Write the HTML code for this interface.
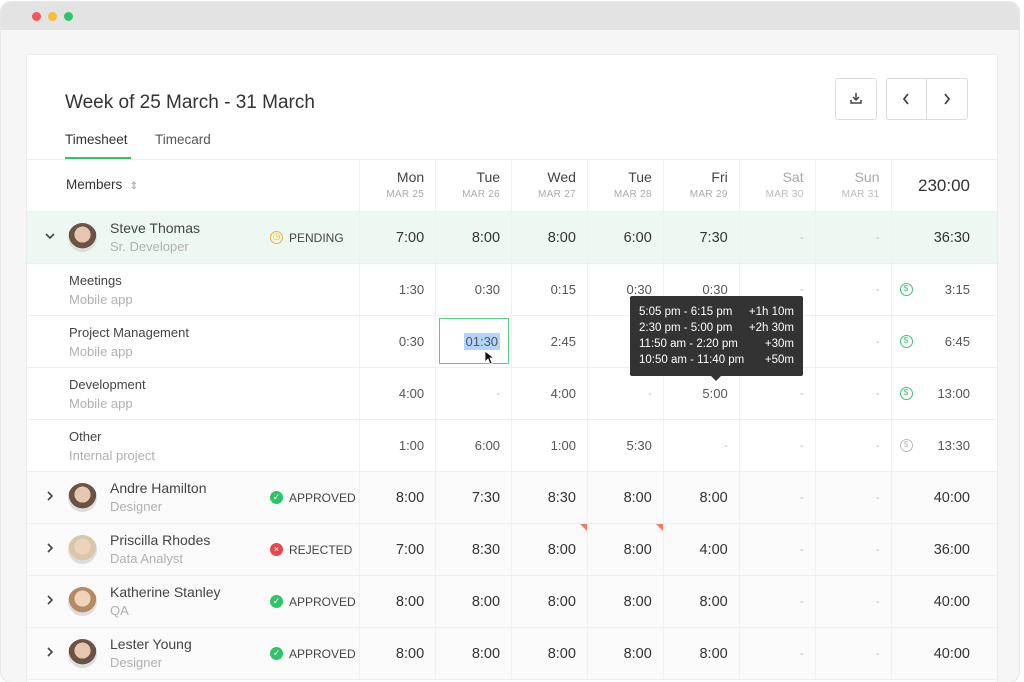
<!DOCTYPE html>
<html><head><meta charset="utf-8"><style>
*{box-sizing:border-box;margin:0;padding:0}
body{width:1024px;height:670px;background:#fff;font-family:"Liberation Sans",sans-serif;position:relative;overflow:hidden;color:#444}
.win{position:absolute;left:1px;top:2px;width:1018px;height:680px;background:#f6f6f6;border-radius:10px;overflow:hidden;box-shadow:0 0 0 1px #e6e6e6}
.bar{height:28px;background:#e3e3e3}
.dot{position:absolute;top:10px;width:9px;height:9px;border-radius:50%}
.card{position:absolute;left:25px;top:52px;width:972px;height:640px;background:#fff;border:1px solid #ececec}
.a{position:absolute}
table{position:absolute;left:0;top:104px;border-collapse:collapse;table-layout:fixed}
td{border-bottom:1px solid #efefef;border-left:1px solid #f0f0f0;text-align:right;padding-right:11px;font-size:14px;color:#444;height:52px;vertical-align:middle;white-space:nowrap}
td:first-child{border-left:none;text-align:left;padding:0;position:relative}
tr.m td{background:#fafafa;font-size:14.5px;color:#333}
tr.s td{background:#eef8f2;font-size:14.5px;color:#333}
tr.sub td{font-size:13px;color:#555}
tr td.d{color:#bbb;font-size:11px}
.nm{position:absolute;left:83px;top:8px;font-size:14px;color:#444}
.rl{position:absolute;left:83px;top:27px;font-size:13px;color:#b0b0b0}
.av{position:absolute;left:41px;top:11px;width:29px;height:29px;border-radius:50%;background:radial-gradient(circle at 50% 40%,#e5c6b1 0 35%,#6b5346 36% 60%,#ddd 61%)}
.chev{position:absolute;left:18px;top:16px;width:10px;height:16px}
.st{position:absolute;left:243px;top:17px;height:17px;font-size:12px;color:#444;white-space:nowrap;display:flex;align-items:center}
.ic{display:inline-block;width:13px;height:13px;border-radius:50%;margin-right:6px;color:#fff;font-size:9px;text-align:center;line-height:13px}
.t1{position:absolute;left:42px;top:9px;font-size:13px;color:#444}
.t2{position:absolute;left:42px;top:28px;font-size:13px;color:#b0b0b0}
.hd{font-size:14px;color:#444;line-height:17px}
.hd small{display:block;font-size:10px;color:#aaa;letter-spacing:.3px}
.dim{color:#aaa}
.usd{position:absolute;left:8px;width:13px;height:13px;border-radius:50%;border:1.5px solid #3cc075;color:#3cc075;font-size:8px;text-align:center;line-height:10px}
</style></head><body>
<div class="win">
<div class="bar"></div>
<div class="dot" style="left:31px;background:#f05a5a"></div>
<div class="dot" style="left:47px;background:#f5be3c"></div>
<div class="dot" style="left:63px;background:#2fc46a"></div>
<div class="card">
<div class="a" style="left:38px;top:37px;font-size:19px;color:#333">Week of 25 March - 31 March</div>
<div class="a" style="left:38px;top:77px;font-size:13.5px;color:#333">Timesheet</div>
<div class="a" style="left:38px;top:102px;width:66px;height:2px;background:#2fc46a"></div>
<div class="a" style="left:128px;top:77px;font-size:13.5px;color:#555">Timecard</div>
<div class="a" style="left:808px;top:23px;width:42px;height:42px;border:1px solid #ddd;border-radius:3px;text-align:center;line-height:40px">
<svg width="14" height="14" viewBox="0 0 14 14" style="vertical-align:-2px"><path d="M7 2v7M4 6l3 3 3-3M2 9v3h10V9" fill="none" stroke="#444" stroke-width="1.5"/></svg></div>
<div class="a" style="left:859px;top:23px;width:82px;height:42px;border:1px solid #ddd;border-radius:3px"></div>
<div class="a" style="left:899px;top:23px;width:1px;height:42px;background:#ddd"></div>
<svg class="a" style="left:875px;top:38px" width="8" height="12" viewBox="0 0 8 12"><path d="M6 1L2 6l4 5" fill="none" stroke="#444" stroke-width="1.8"/></svg>
<svg class="a" style="left:916px;top:38px" width="8" height="12" viewBox="0 0 8 12"><path d="M2 1l4 5-4 5" fill="none" stroke="#444" stroke-width="1.8"/></svg>
<table>
<colgroup><col style="width:334px"><col style="width:76px"><col style="width:76px"><col style="width:76px"><col style="width:76px"><col style="width:76px"><col style="width:76px"><col style="width:76px"><col style="width:106px"></colgroup>
<tr class="h"><td style="border-top:1px solid #efefef"><span class="a" style="left:39px;top:17px;font-size:13.5px;color:#333">Members &nbsp;<span style="color:#999;font-size:10px">⇕</span></span></td>
<td style="border-top:1px solid #efefef" class="hd">Mon<small>MAR 25</small></td>
<td style="border-top:1px solid #efefef" class="hd">Tue<small>MAR 26</small></td>
<td style="border-top:1px solid #efefef" class="hd">Wed<small>MAR 27</small></td>
<td style="border-top:1px solid #efefef" class="hd">Tue<small>MAR 28</small></td>
<td style="border-top:1px solid #efefef" class="hd">Fri<small>MAR 29</small></td>
<td style="border-top:1px solid #efefef" class="hd"><span class="dim">Sat</span><small style="color:#bbb">MAR 30</small></td>
<td style="border-top:1px solid #efefef" class="hd"><span class="dim">Sun</span><small style="color:#bbb">MAR 31</small></td>
<td style="border-top:1px solid #efefef;font-size:17px;color:#333;padding-right:27px">230:00</td></tr>
<tr class="s"><td><svg class="chev" viewBox="0 0 10 16"><path d="M1 6l4 4 4-4" fill="none" stroke="#444" stroke-width="1.6"/></svg><div class="av"></div><span class="nm">Steve Thomas</span><span class="rl">Sr. Developer</span><span class="st"><span class="ic" style="border:1.5px solid #f0b429;background:none;color:#f0b429;line-height:9px">◷</span>PENDING</span></td>
<td>7:00</td><td>8:00</td><td>8:00</td><td>6:00</td><td>7:30</td><td class="d">-</td><td class="d">-</td><td style="padding-right:27px">36:30</td></tr>
<tr class="sub"><td><span class="t1">Meetings</span><span class="t2">Mobile app</span></td><td>1:30</td><td>0:30</td><td>0:15</td><td>0:30</td><td>0:30</td><td class="d">-</td><td class="d">-</td><td style="position:relative;padding-right:27px"><span class="usd" style="top:19px">$</span>3:15</td></tr>
<tr class="sub"><td><span class="t1">Project Management</span><span class="t2">Mobile app</span></td><td>0:30</td><td style="position:relative"><div class="a" style="left:3px;top:2px;width:70px;height:46px;border:1px solid #5ccc8a"></div><span style="background:#b3d4fc;padding:1px 2px">01:30</span></td><td>2:45</td><td class="d">-</td><td>2:00</td><td class="d">-</td><td class="d">-</td><td style="position:relative;padding-right:27px"><span class="usd" style="top:19px">$</span>6:45</td></tr>
<tr class="sub"><td><span class="t1">Development</span><span class="t2">Mobile app</span></td><td>4:00</td><td class="d">-</td><td>4:00</td><td class="d">-</td><td>5:00</td><td class="d">-</td><td class="d">-</td><td style="position:relative;padding-right:27px"><span class="usd" style="top:19px">$</span>13:00</td></tr>
<tr class="sub"><td><span class="t1">Other</span><span class="t2">Internal project</span></td><td>1:00</td><td>6:00</td><td>1:00</td><td>5:30</td><td class="d">-</td><td class="d">-</td><td class="d">-</td><td style="position:relative;padding-right:27px"><span class="usd" style="top:19px;border-color:#bbb;color:#bbb">$</span>13:30</td></tr>
<tr class="m"><td><svg class="chev" viewBox="0 0 10 16"><path d="M3 4l4 4-4 4" fill="none" stroke="#444" stroke-width="1.6"/></svg><div class="av"></div><span class="nm">Andre Hamilton</span><span class="rl">Designer</span><span class="st"><span class="ic" style="background:#2fc46a">✓</span>APPROVED</span></td><td>8:00</td><td>7:30</td><td>8:30</td><td>8:00</td><td>8:00</td><td class="d">-</td><td class="d">-</td><td style="padding-right:27px">40:00</td></tr>
<tr class="m"><td><svg class="chev" viewBox="0 0 10 16"><path d="M3 4l4 4-4 4" fill="none" stroke="#444" stroke-width="1.6"/></svg><div class="av" style="background:radial-gradient(circle at 50% 40%,#ecd3c0 0 35%,#d8c8a8 36% 60%,#ddd 61%)"></div><span class="nm">Priscilla Rhodes</span><span class="rl">Data Analyst</span><span class="st"><span class="ic" style="background:#e5484d">×</span>REJECTED</span></td><td>7:00</td><td>8:30</td><td style="position:relative">8:00<span class="a" style="right:0;top:0;border-top:7px solid #f07a6a;border-left:7px solid transparent"></span></td><td style="position:relative">8:00<span class="a" style="right:0;top:0;border-top:7px solid #f07a6a;border-left:7px solid transparent"></span></td><td>4:00</td><td class="d">-</td><td class="d">-</td><td style="padding-right:27px">36:00</td></tr>
<tr class="m"><td><svg class="chev" viewBox="0 0 10 16"><path d="M3 4l4 4-4 4" fill="none" stroke="#444" stroke-width="1.6"/></svg><div class="av" style="background:radial-gradient(circle at 50% 40%,#f0d2bd 0 35%,#b58a62 36% 60%,#ddd 61%)"></div><span class="nm">Katherine Stanley</span><span class="rl">QA</span><span class="st"><span class="ic" style="background:#2fc46a">✓</span>APPROVED</span></td><td>8:00</td><td>8:00</td><td>8:00</td><td>8:00</td><td>8:00</td><td class="d">-</td><td class="d">-</td><td style="padding-right:27px">40:00</td></tr>
<tr class="m"><td><svg class="chev" viewBox="0 0 10 16"><path d="M3 4l4 4-4 4" fill="none" stroke="#444" stroke-width="1.6"/></svg><div class="av"></div><span class="nm">Lester Young</span><span class="rl">Designer</span><span class="st"><span class="ic" style="background:#2fc46a">✓</span>APPROVED</span></td><td>8:00</td><td>8:00</td><td>8:00</td><td>8:00</td><td>8:00</td><td class="d">-</td><td class="d">-</td><td style="padding-right:27px">40:00</td></tr>
</table>
<div class="a" style="left:603px;top:241px;width:173px;height:80px;background:#333;border-radius:2px;color:#fff;font-size:11.5px;line-height:16px;padding:8px 9px">
<div style="display:flex;justify-content:space-between"><span>5:05 pm - 6:15 pm</span><span>+1h 10m</span></div>
<div style="display:flex;justify-content:space-between"><span>2:30 pm - 5:00 pm</span><span>+2h 30m</span></div>
<div style="display:flex;justify-content:space-between"><span>11:50 am - 2:20 pm</span><span>+30m</span></div>
<div style="display:flex;justify-content:space-between"><span>10:50 am - 11:40 pm</span><span>+50m</span></div>
<span class="a" style="left:81px;top:80px;border-top:5px solid #333;border-left:5px solid transparent;border-right:5px solid transparent"></span>
</div>
<svg class="a" style="left:457px;top:295px" width="10" height="15" viewBox="0 0 10 15"><path d="M1 1v11l3-3 2 5 2-1-2-5h4z" fill="#111" stroke="#fff" stroke-width=".8"/></svg>
</div>
</div>
</body></html>
